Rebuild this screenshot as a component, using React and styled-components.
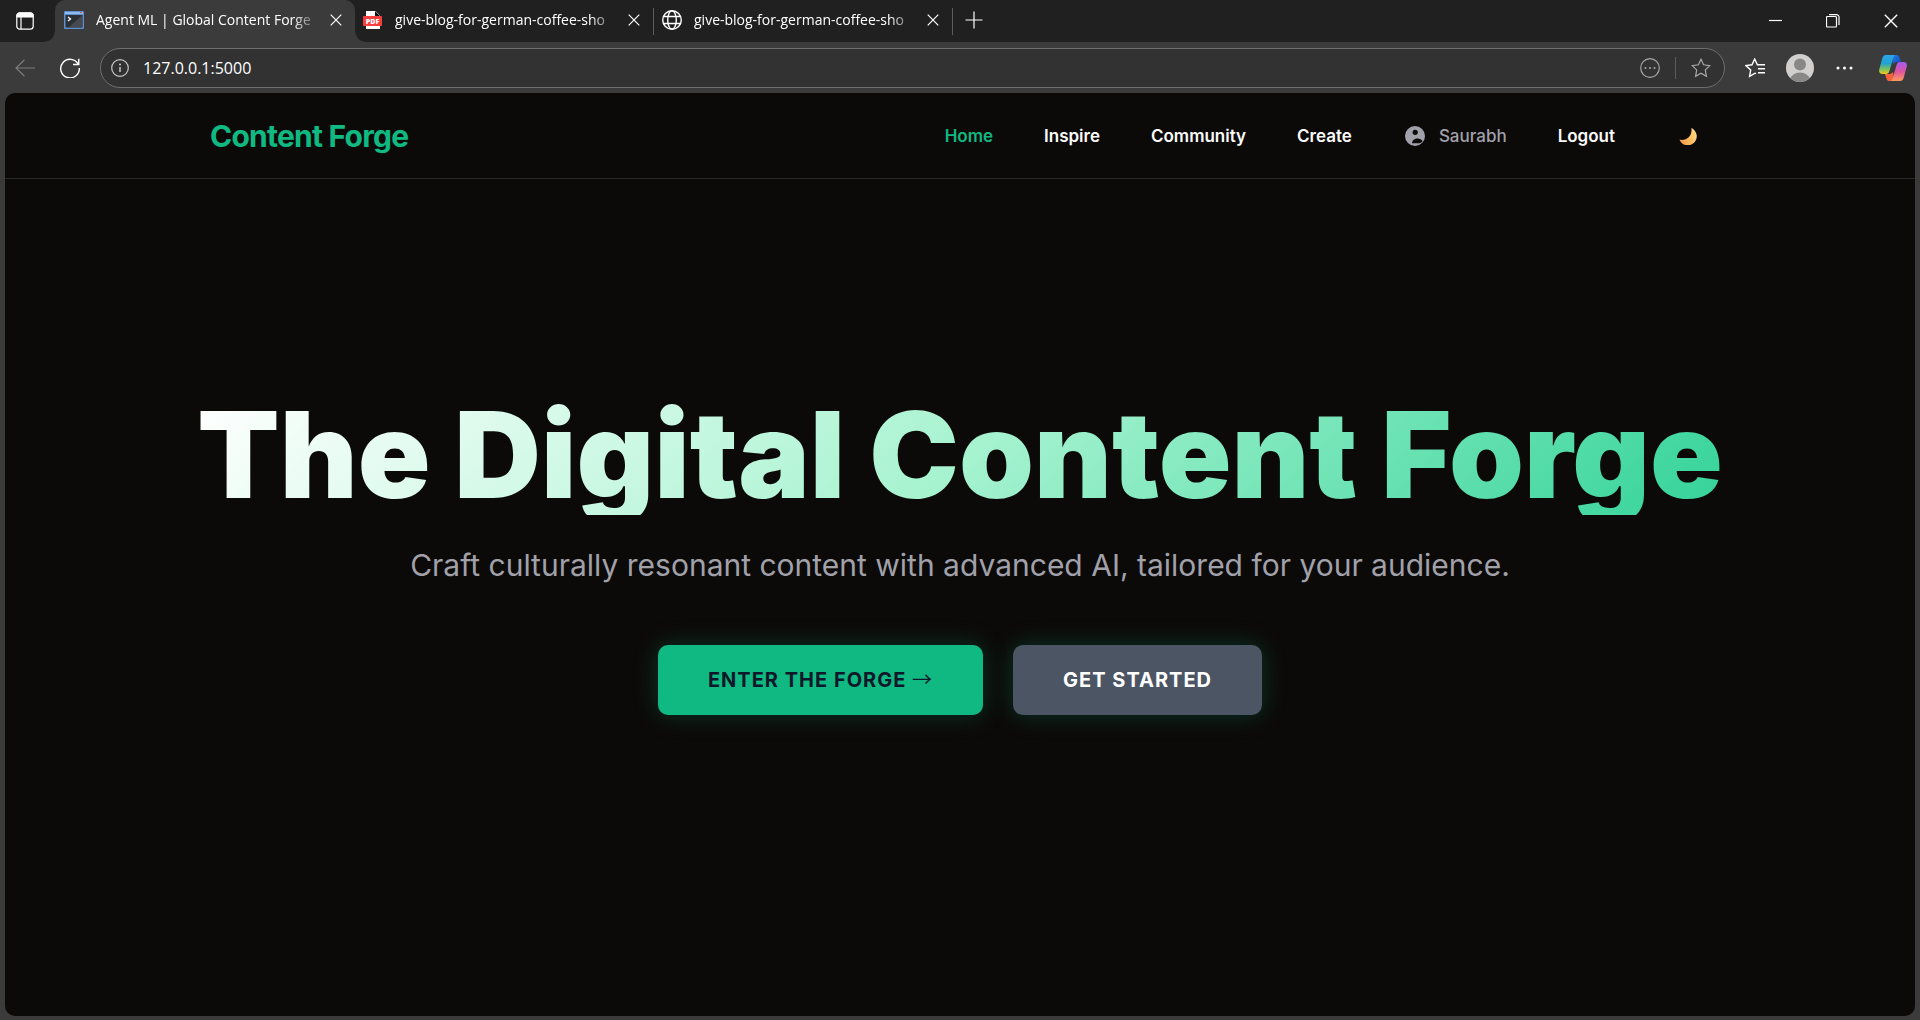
import React, { useState } from "react";
import styled, { createGlobalStyle, css } from "styled-components";

const TABS = [
  { id: 1, icon: "terminal", title: "Agent ML | Global Content Forge" },
  { id: 2, icon: "pdf", title: "give-blog-for-german-coffee-sho" },
  { id: 3, icon: "globe", title: "give-blog-for-german-coffee-sho" },
];

const LINKS = ["Home", "Inspire", "Community", "Create"];

const App = () => {
  const [url, setUrl] = useState("127.0.0.1:5000");

  return (
    <>
      <GlobalStyle />
      <Window>
        <TabBar>
          <TabMenuButton aria-label="Tab actions">
            <TabMenuIcon />
          </TabMenuButton>
          {TABS.map((tab, i) => (
            <Tab key={tab.id} $active={i === 0}>
              <TabIcon name={tab.icon} />
              <TabTitle>{tab.title}</TabTitle>
              <TabClose aria-label="Close tab">
                <CrossIcon size={12} />
              </TabClose>
            </Tab>
          ))}
          <NewTab aria-label="New tab">
            <PlusIcon />
          </NewTab>
          <WindowControls>
            <WindowButton aria-label="Minimize">
              <Icon width="14" height="14" viewBox="0 0 14 14">
                <path d="M1 6.5h13" />
              </Icon>
            </WindowButton>
            <WindowButton aria-label="Restore">
              <Icon width="14" height="14" viewBox="0 0 14 14">
                <rect x="0.5" y="2.5" width="10" height="10.5" rx="1" />
                <path d="M3 .6h7.5a2.5 2.5 0 0 1 2.5 2.5V11" />
              </Icon>
            </WindowButton>
            <WindowButton aria-label="Close">
              <CrossIcon size={14} />
            </WindowButton>
          </WindowControls>
        </TabBar>

        <Toolbar>
          <ToolButton aria-label="Back" disabled>
            <BackIcon />
          </ToolButton>
          <ToolButton aria-label="Refresh">
            <RefreshIcon />
          </ToolButton>
          <AddressBar>
            <InfoIcon />
            <AddressInput
              aria-label="Address"
              value={url}
              onChange={(e) => setUrl(e.target.value)}
            />
            <AddressButton aria-label="Page options">
              <Icon width="20" height="20" viewBox="0 0 20 20">
                <circle cx="10" cy="10" r="9.3" />
                <Dots cy={10} xs={[5.5, 10, 14.5]} r={1} />
              </Icon>
            </AddressButton>
            <AddressDivider />
            <AddressButton aria-label="Add to favorites">
              <Icon width="20" height="20" viewBox="0 0 20 20">
                <path d={STAR} />
              </Icon>
            </AddressButton>
          </AddressBar>
          <SideButton aria-label="Favorites">
            <FavoritesIcon />
          </SideButton>
          <SideButton aria-label="Profile">
            <ProfileIcon />
          </SideButton>
          <SideButton aria-label="Settings and more">
            <Icon width="18" height="18" viewBox="0 0 18 18">
              <Dots cy={9} xs={[3, 9.5, 16]} r={1.5} />
            </Icon>
          </SideButton>
          <SideButton aria-label="Copilot">
            <CopilotIcon />
          </SideButton>
        </Toolbar>

        <Page>
          <Header>
            <Nav>
              <Logo href="#home">Content Forge</Logo>
              <NavLinks>
                {LINKS.map((link, i) => (
                  <NavLink key={link} href={`#${link}`} $active={i === 0}>
                    {link}
                  </NavLink>
                ))}
                <User>
                  <UserIcon />
                  Saurabh
                </User>
                <NavLink href="#logout">Logout</NavLink>
                <ThemeButton aria-label="Toggle theme">
                  <MoonIcon />
                </ThemeButton>
              </NavLinks>
            </Nav>
          </Header>

          <Hero>
            <HeroTitle>The Digital Content Forge</HeroTitle>
            <HeroText>
              Craft culturally resonant content with advanced AI, tailored for
              your audience.
            </HeroText>
            <HeroButtons>
              <HeroButton>
                Enter the Forge <Arrow>→</Arrow>
              </HeroButton>
              <HeroButton $secondary>Get Started</HeroButton>
            </HeroButtons>
          </Hero>
        </Page>
      </Window>
    </>
  );
};

export default App;

/* icons */

const STAR =
  "M10 1.2l2.6 5.6 6.2.8-4.5 4.3 1.1 6.4L10 15.2l-5.4 3.1 1.1-6.4L1.2 7.6l6.2-.8z";

const Dots = ({ xs, cy, r }) =>
  xs.map((x) => (
    <circle key={x} cx={x} cy={cy} r={r} fill="currentColor" stroke="none" />
  ));

const CrossIcon = ({ size }) => (
  <Icon width={size} height={size} viewBox="0 0 12 12">
    <path d="M.7.7l10.6 10.6M11.3.7L.7 11.3" />
  </Icon>
);

const PlusIcon = () => (
  <Icon width="18" height="18" viewBox="0 0 18 18">
    <path d="M9 .5v17M.5 9h17" />
  </Icon>
);

const TabMenuIcon = () => (
  <Icon width="18" height="18" viewBox="0 0 18 18">
    <rect x=".8" y=".8" width="16.4" height="16.4" rx="3" />
    <path
      d="M1 3.5A2.5 2.5 0 0 1 3.5 1h11A2.5 2.5 0 0 1 17 3.5V5H1z"
      fill="currentColor"
    />
    <path d="M5 5v12" />
  </Icon>
);

const BackIcon = () => (
  <Icon width="20" height="18" viewBox="0 0 20 18">
    <path d="M9.5 .8L1 9l8.5 8.2M1 9h19" />
  </Icon>
);

const RefreshIcon = () => (
  <Icon width="20" height="20" viewBox="0 0 20 20" strokeWidth="1.4">
    <path d="M18.2 6.2A9.3 9.3 0 1 0 19.3 10M18.8 .8v5.7h-5.7" />
  </Icon>
);

const InfoIcon = () => (
  <Icon width="18" height="18" viewBox="0 0 18 18">
    <circle cx="9" cy="9" r="8.3" />
    <path d="M9 8v5" strokeWidth="1.5" />
    <circle cx="9" cy="5.5" r="1" fill="currentColor" stroke="none" />
  </Icon>
);

const FavoritesIcon = () => (
  <Icon width="20" height="20" viewBox="0 0 20 20" strokeWidth="1.4">
    <path d="M11 15.7l-1-.5-5.4 3.1 1.1-6.4L1 7.6l6-.8L9.7 1l2.7 5.8H20M13 10.7h7M13 14.7h7" />
  </Icon>
);

const ProfileIcon = () => (
  <svg width="28" height="28" viewBox="0 0 28 28">
    <clipPath id="profile">
      <circle cx="14" cy="14" r="14" />
    </clipPath>
    <g clipPath="url(#profile)">
      <rect width="28" height="28" fill="#d2d0ce" />
      <circle cx="14" cy="10.5" r="6" fill="#8a8886" />
      <ellipse cx="14" cy="25" rx="9.5" ry="6.5" fill="#8a8886" />
    </g>
  </svg>
);

const CopilotIcon = () => (
  <svg width="28" height="26" viewBox="0 0 28 26">
    <defs>
      <linearGradient id="cpLeft" x1="0" y1="0" x2="0" y2="1">
        <stop offset="0" stopColor="#2aa5ea" />
        <stop offset=".45" stopColor="#22a3cf" />
        <stop offset=".75" stopColor="#7cc35a" />
        <stop offset="1" stopColor="#f4c91a" />
      </linearGradient>
      <linearGradient id="cpRight" x1="0" y1="0" x2="0" y2="1">
        <stop offset="0" stopColor="#a45cf0" />
        <stop offset=".5" stopColor="#e0559f" />
        <stop offset="1" stopColor="#ff9a5c" />
      </linearGradient>
      <linearGradient id="cpTop" x1="0" y1="0" x2="1" y2="1">
        <stop offset="0" stopColor="#1b86e0" />
        <stop offset="1" stopColor="#1a3fc0" />
      </linearGradient>
    </defs>
    <path
      d="M13 0h4.5c1.8 0 2.6 1 3.1 2.6L22 7h-4.5c-1.8 0-3 .9-3.6 2.5z"
      fill="url(#cpTop)"
    />
    <path
      d="M15 26h-4.5c-1.8 0-2.6-1-3.1-2.6L6 19h4.5c1.8 0 3-.9 3.6-2.5z"
      fill="#f4623a"
    />
    <path
      d="M6.8 0H17c-1.6 0-2.3 1.3-2.9 3.3l-3.6 12.5C9.9 18 8.7 19 7 19H3.5C.6 19-.4 17 .3 14.2L3.2 3.5C3.8 1.3 4.9 0 6.8 0z"
      fill="url(#cpLeft)"
    />
    <path
      d="M21.2 26H11c1.6 0 2.3-1.3 2.9-3.3l3.6-12.5C18.1 8 19.3 7 21 7h3.5c2.9 0 3.9 2 3.2 4.8l-2.9 10.7c-.6 2.2-1.7 3.5-3.6 3.5z"
      fill="url(#cpRight)"
    />
  </svg>
);

const TabIcon = ({ name }) => {
  if (name === "terminal") {
    return (
      <svg width="20" height="18" viewBox="0 0 20 18">
        <rect width="20" height="18" rx="1" fill="#5f8fcf" />
        <path d="M1 1h18v2H1z" fill="#8dbaf0" />
        <path d="M16 1h2v1h-2z" fill="#e0503c" />
        <path d="M1.5 4h17v12.5h-17z" fill="#2b3036" />
        <path d="M18.5 4v12.5h-14z" fill="#454a50" />
        <path d="M4 6l2.5 2L4 10" fill="none" stroke="#fff" strokeWidth="1.3" />
      </svg>
    );
  }
  if (name === "pdf") {
    return (
      <svg width="20" height="20" viewBox="0 0 20 20">
        <path d="M3 1h9.5L17 5.5V19H3z" fill="#fff" />
        <path d="M12 1v5h5z" fill="#111" />
        <rect y="6" width="19" height="10" rx="1" fill="#f5403f" />
        <text
          x="9.5"
          y="13.5"
          textAnchor="middle"
          fontFamily="Open Sans, sans-serif"
          fontSize="7"
          fontWeight="800"
          fill="#fff"
        >
          PDF
        </text>
      </svg>
    );
  }
  return (
    <Icon width="20" height="20" viewBox="0 0 20 20" strokeWidth="1.4">
      <circle cx="10" cy="10" r="9.3" />
      <ellipse cx="10" cy="10" rx="4.3" ry="9.3" />
      <path d="M1.5 6.5h17M1.5 13.5h17" />
    </Icon>
  );
};

const UserIcon = () => (
  <svg width="24" height="24" viewBox="-2 -2 24 24">
    <circle cx="10" cy="10" r="10" fill="#a1a1aa" />
    <circle cx="10.2" cy="6.3" r="2.6" fill="#0c0a09" />
    <path
      d="M7 17.2c.2-2.8 2.6-4.7 5.6-4.7 2.1 0 3.9 1 5 2.7-1 1.4-2.5 2-4.6 2z"
      fill="#0c0a09"
    />
  </svg>
);

const MoonIcon = () => (
  <svg width="18" height="18" viewBox="0 0 18 18">
    <defs>
      <linearGradient id="moon" x1="0" y1=".8" x2="1" y2=".3">
        <stop offset="0" stopColor="#f79a4b" />
        <stop offset=".6" stopColor="#fdbf63" />
        <stop offset="1" stopColor="#ffdc83" />
      </linearGradient>
    </defs>
    <path
      d="M12.3 1A9 9 0 1 1 .4 12.6C7.5 14.3 13.8 8.8 12.3 1z"
      fill="url(#moon)"
    />
  </svg>
);

/* styles */

const GlobalStyle = createGlobalStyle`
  * {
    box-sizing: border-box;
  }
  body {
    margin: 0;
    background: #3b3b3b;
    font-family: "Inter", sans-serif;
  }
  button {
    padding: 0;
    border: none;
    background: none;
    color: inherit;
    font-family: inherit;
    cursor: pointer;
  }
  a {
    text-decoration: none;
  }
`;

const Icon = styled.svg.attrs((props) => ({
  fill: "none",
  stroke: "currentColor",
  strokeWidth: props.strokeWidth || "1.2",
}))`
  display: block;
  flex-shrink: 0;
`;

const Window = styled.div`
  display: flex;
  flex-direction: column;
  min-height: 100vh;
  color: #ffffff;
`;

const TabBar = styled.div`
  display: flex;
  height: 42px;
  background: #202020;
  font-family: "Open Sans", "Noto Sans", sans-serif;
`;

const TabMenuButton = styled.button`
  display: flex;
  align-items: center;
  justify-content: center;
  width: 55px;
  padding-right: 5px;
`;

const Tab = styled.div`
  display: flex;
  align-items: center;
  width: 299px;
  padding: 0 13px 2px 8px;
  ${(props) =>
    props.$active
      ? css`
          position: relative;
          width: 300px;
          padding-left: 9px;
          border-radius: 10px 10px 0 0;
          background: #3b3b3b;
          /* curved feet of the open tab */
          &::before,
          &::after {
            content: "";
            position: absolute;
            bottom: 0;
            width: 10px;
            height: 10px;
          }
          &::before {
            right: 100%;
            background: radial-gradient(
              circle at 0 0,
              transparent 9px,
              #3b3b3b 10px
            );
          }
          &::after {
            left: 100%;
            background: radial-gradient(
              circle at 100% 0,
              transparent 9px,
              #3b3b3b 10px
            );
          }
        `
      : css`
          border-right: 1px solid #5c5c5c;
          border-image: linear-gradient(
              transparent 9px,
              #5c5c5c 9px,
              #5c5c5c 34px,
              transparent 34px
            )
            1;
        `}
`;

const TabTitle = styled.span`
  flex: 1;
  margin: 0 10px 0 12px;
  overflow: hidden;
  font-size: 14px;
  line-height: 20px;
  white-space: nowrap;
  mask-image: linear-gradient(to left, transparent, #000 28px);
`;

const TabClose = styled.button`
  display: flex;
  padding: 4px 0;
`;

const NewTab = styled.button`
  display: flex;
  align-items: center;
  padding: 0 12px 3px;
`;

const WindowControls = styled.div`
  display: flex;
  margin-left: auto;
`;

const WindowButton = styled.button`
  display: flex;
  align-items: center;
  justify-content: center;
  width: 58px;
`;

const Toolbar = styled.div`
  display: flex;
  align-items: center;
  height: 51px;
  padding: 0 13px 0 15px;
  background: #3b3b3b;
`;

const ToolButton = styled.button`
  display: flex;
  margin-right: 25px;
  &:disabled {
    color: #7c7c7c;
  }
  & + & {
    margin-right: 20px;
  }
`;

const AddressBar = styled.div`
  display: flex;
  flex: 1;
  align-items: center;
  height: 40px;
  margin-right: 20px;
  padding: 0 13px 0 10px;
  border: 1px solid #6e6e6e;
  border-radius: 20px;
  background: #323232;
  color: #c8c8c8;
`;

const AddressInput = styled.input`
  flex: 1;
  margin: 0 14px;
  padding: 0;
  border: none;
  outline: none;
  background: none;
  color: #ffffff;
  font-family: "Open Sans", "Noto Sans", sans-serif;
  font-size: 16px;
  line-height: 24px;
`;

const AddressButton = styled.button`
  display: flex;
  color: #a8a8a8;
`;

const AddressDivider = styled.span`
  width: 1px;
  height: 22px;
  margin: 0 15px;
  background: #5c5c5c;
`;

const SideButton = styled.button`
  display: flex;
  margin-right: 21px;
  svg {
    display: block;
  }
  &:last-child {
    margin: 0 0 0 5px;
  }
`;

const Page = styled.div`
  display: flex;
  flex: 1;
  flex-direction: column;
  margin: 0 5px 4px;
  border-radius: 10px;
  background: #0c0a09;
`;

const Header = styled.header`
  padding: 0 24px;
  border-bottom: 1px solid #27272a;
`;

const Nav = styled.nav`
  display: flex;
  align-items: center;
  justify-content: space-between;
  max-width: 1500px;
  height: 85px;
  margin: 0 auto;
`;

const Logo = styled.a`
  color: #10b981;
  font-size: 30px;
  font-weight: 700;
  letter-spacing: -0.025em;
`;

const NavLinks = styled.div`
  display: flex;
  align-items: center;
  gap: 51px;
  font-size: 17px;
  font-weight: 600;
  line-height: 24px;
`;

const NavLink = styled.a`
  color: ${(props) => (props.$active ? "#10b981" : "#fafafa")};
`;

const User = styled.span`
  display: flex;
  align-items: center;
  gap: 12px;
  color: #a1a1aa;
  font-weight: 500;
`;

const ThemeButton = styled.button`
  display: flex;
  padding: 8px 13px;
`;

const Hero = styled.main`
  display: flex;
  flex: 1;
  flex-direction: column;
  align-items: center;
  justify-content: center;
  padding: 0 24px 86px;
  text-align: center;
`;

const HeroTitle = styled.h1`
  margin: 0 0 26px;
  background: linear-gradient(135deg, #ffffff 0%, #a7f3d0 50%, #34d399 100%);
  background-clip: text;
  color: transparent;
  font-size: 120px;
  font-weight: 900;
  line-height: 120px;
`;

const HeroText = styled.p`
  margin: 0 0 56px;
  color: #a1a1aa;
  font-size: 30px;
  line-height: 48px;
`;

const HeroButtons = styled.div`
  display: flex;
  gap: 30px;
`;

const HeroButton = styled.button`
  height: 70px;
  padding: 0 50px;
  border-radius: 10px;
  background: ${(props) => (props.$secondary ? "#4b5563" : "#10b981")};
  box-shadow: 0 0 25px rgba(16, 185, 129, 0.25);
  color: ${(props) => (props.$secondary ? "#ffffff" : "#0f172a")};
  font-size: 20px;
  font-weight: 700;
  line-height: 24px;
  letter-spacing: 1px;
  text-transform: uppercase;
`;

const Arrow = styled.span`
  font-family: "Noto Sans CJK JP", sans-serif;
  font-weight: 400;
  line-height: 1;
`;
